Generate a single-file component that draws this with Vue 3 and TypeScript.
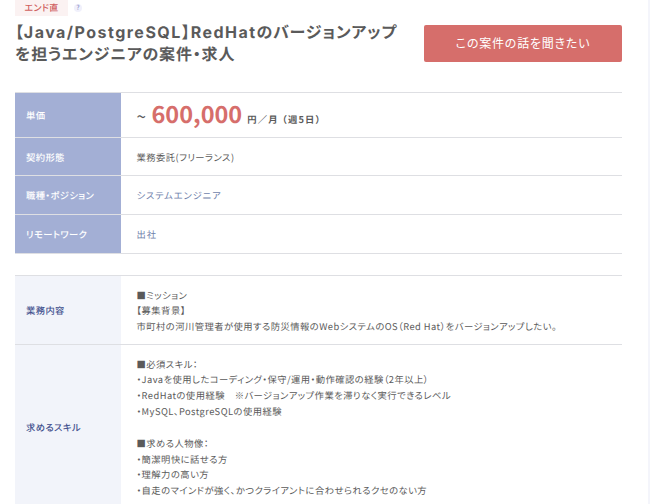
<script setup lang="ts">
interface Detail { label: string; lines: string[]; kind: string }

const conditions = [
  { label: '契約形態', value: '業務委託(フリーランス)', link: false, kind: 'contract' },
  { label: '職種・ポジション', value: 'システムエンジニア', link: true, kind: 'position' },
  { label: 'リモートワーク', value: '出社', link: true, kind: 'remote' },
]

const details: Detail[] = [
  {
    label: '業務内容',
    kind: 'mission',
    lines: [
      '■ミッション',
      '【募集背景】',
      '市町村の河川管理者が使用する防災情報のWebシステムのOS（Red Hat）をバージョンアップしたい。',
    ],
  },
  {
    label: '求めるスキル',
    kind: 'skills',
    lines: [
      '■必須スキル：',
      '・Javaを使用したコーディング・保守/運用・動作確認の経験（2年以上）',
      '・RedHatの使用経験　※バージョンアップ作業を滞りなく実行できるレベル',
      '・MySQL、PostgreSQLの使用経験',
      '',
      '■求める人物像：',
      '・簡潔明快に話せる方',
      '・理解力の高い方',
      '・自走のマインドが強く、かつクライアントに合わせられるクセのない方',
    ],
  },
]
</script>

<template>
  <main class="page">
    <div class="tags">
      <span class="tag">エンド直</span>
      <span class="help">?</span>
    </div>
    <header class="head">
      <h1 class="title">
        <span class="title-line">【<span class="latin">Java/PostgreSQL</span>】<span class="latin">RedHat</span>のバージョンアップ</span>
        <span class="title-line">を担うエンジニアの案件・求人</span>
      </h1>
      <button class="cta" type="button">この案件の話を聞きたい</button>
    </header>

    <dl class="table summary">
      <div class="row price-row">
        <dt>単価</dt>
        <dd class="price"><span class="tilde">~</span><strong>600,000</strong><span class="unit">円／月 （週5日）</span></dd>
      </div>
      <div v-for="c in conditions" :key="c.label" class="row" :class="c.kind">
        <dt>{{ c.label }}</dt>
        <dd><a v-if="c.link">{{ c.value }}</a><span v-else>{{ c.value }}</span></dd>
      </div>
    </dl>

    <dl class="table detail">
      <div v-for="d in details" :key="d.label" class="row" :class="d.kind">
        <dt>{{ d.label }}</dt>
        <dd>
          <p v-for="(l, i) in d.lines" :key="i">{{ l }}</p>
        </dd>
      </div>
    </dl>
  </main>
</template>

<style>
body { background: #fff; overflow: hidden; }
</style>

<style scoped>
* { box-sizing: border-box; margin: 0; }
.page {
  height: 504px;
  overflow: hidden;
  padding: 0 26px 0 15px;
  border-right: 2px solid #f4f5fb;
  font-family: "Noto Sans CJK JP", sans-serif;
  font-feature-settings: "palt";
  text-rendering: geometricPrecision;
  color: #5a5a5a;
  font-size: 9.3px;
  letter-spacing: 0.4px;
  white-space: nowrap;
}
.tags { display: flex; height: 16px; gap: 6px; }
.tag {
  width: 53px;
  text-align: center;
  background: #fbf2f2;
  color: #d0605f;
  font-size: 9px;
  line-height: 15px;
  letter-spacing: 0.3px;
  font-weight: 500;
}
.help {
  width: 8px;
  height: 8px;
  margin-top: 4px;
  border-radius: 50%;
  background: #f0f0fb;
  color: #8187c4;
  font-size: 7px;
  line-height: 8px;
  text-align: center;
  letter-spacing: 0;
}
.head { display: flex; justify-content: space-between; height: 76px; }
.title {
  padding-top: 4px;
  font-size: 16px;
  line-height: 22px;
  font-weight: 700;
  letter-spacing: 0.83px;
}
.title-line { display: block; height: 22px; }
.latin { font-family: Inter, sans-serif; font-weight: 700; letter-spacing: 1.48px; }
.cta {
  width: 198px;
  height: 37px;
  margin: 9px 0 0;
  padding: 0 0 2px;
  border: 0;
  border-radius: 2px;
  background: #d66e6b;
  color: #fff;
  font: inherit;
  font-size: 12px;
  letter-spacing: 0.8px;
}
.table { width: 607px; border-top: 1px solid #dedfe3; }
.row { display: grid; grid-template-columns: 106px 1fr; grid-template-rows: 100%; border-bottom: 1px solid #dedfe3; }
dt { display: flex; align-items: center; padding-left: 11px; font-weight: 500; }
dd { display: flex; flex-direction: column; justify-content: center; padding-left: 15.5px; letter-spacing: 0.46px; }
.summary dt { background: #a3afd5; color: #fff; }
.detail { margin-top: 21px; }
.detail dt { background: #f2f4fa; color: #44528f; }
.price-row { height: 45px; }
.contract { height: 38px; }
.position, .remote { height: 39px; }
dd a { color: #6f7fab; letter-spacing: 0.85px; }
.price { flex-direction: row; align-items: baseline; justify-content: flex-start; line-height: 41px; }
.price strong { margin-left: 5px; color: #d66e6b; font-size: 23.5px; font-weight: 700; letter-spacing: 0; }
.tilde { font-size: 17px; }
.unit { margin-left: 5px; font-weight: 700; letter-spacing: 1.2px; }
.mission { height: 69px; }
.skills { height: 164px; }
.detail dd { justify-content: flex-start; padding-top: 11.5px; }
.detail p { height: 15.85px; line-height: 15.85px; }
</style>
